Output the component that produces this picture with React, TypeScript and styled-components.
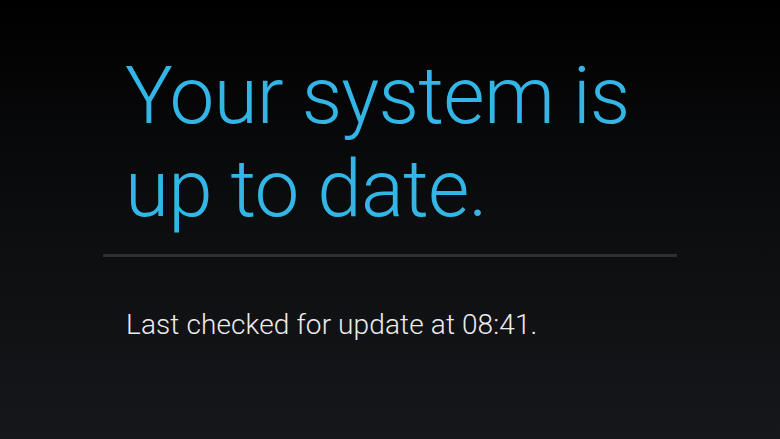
import React from 'react';
import styled, { createGlobalStyle } from 'styled-components';

const GlobalStyle = createGlobalStyle`
  html, body {
    margin: 0;
    padding: 0;
    height: 100%;
  }
  body {
    font-family: Roboto, "Noto Sans", sans-serif;
    overflow: hidden;
  }
`;

const Screen = styled.div`
  width: 780px;
  height: 439px;
  box-sizing: border-box;
  background: linear-gradient(180deg, #000000 0%, #0b0c0e 45%, #15171a 100%);
  padding: 50px 103px 0 103px;
`;

const Panel = styled.section`
  display: flex;
  flex-direction: column;
  width: 574px;
`;

const Headline = styled.h1`
  margin: 0;
  padding-left: 22px;
  font-family: Roboto, sans-serif;
  font-weight: 300;
  font-size: 80px;
  line-height: 93px;
  letter-spacing: -0.8px;
  color: #33b5e5;
`;

const Divider = styled.hr`
  margin: 18px 0 0 0;
  height: 3px;
  border: none;
  background: #2e2f32;
`;

const Status = styled.p`
  margin: 51px 0 0 0;
  padding-left: 23px;
  font-family: Roboto, sans-serif;
  font-weight: 300;
  font-size: 28px;
  line-height: 33px;
  letter-spacing: 0.12px;
  color: #ececec;
`;

export default function App() {
  return (
    <>
      <GlobalStyle />
      <Screen>
        <Panel>
          <Headline>
            Your system is
            <br />
            up to date.
          </Headline>
          <Divider />
          <Status>Last checked for update at 08:41.</Status>
        </Panel>
      </Screen>
    </>
  );
}
